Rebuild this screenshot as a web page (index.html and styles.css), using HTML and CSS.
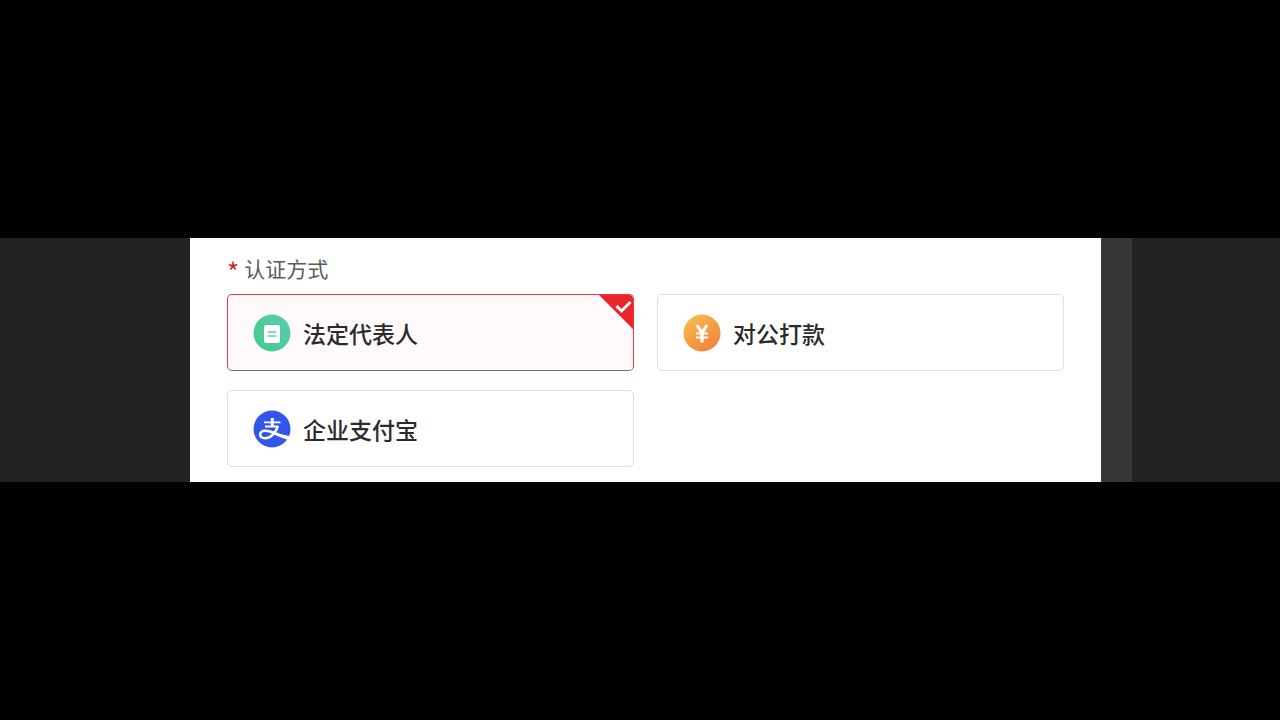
FILE: index.html
```html
<!DOCTYPE html>
<html lang="zh-CN">
<head>
  <meta charset="utf-8">
  <meta name="viewport" content="width=device-width, initial-scale=1">
  <title>认证方式</title>
  <link rel="stylesheet" href="styles.css">
</head>
<body>

<main class="stage">
  <form class="panel">
    <fieldset class="field">
      <legend class="field-label"><span class="required">*</span>认证方式</legend>
      <div class="options">

        <label class="option">
          <input class="option-input" type="radio" name="method" value="legal" checked>
          <svg class="option-icon" viewBox="0 0 38 38" aria-hidden="true">
            <defs>
              <linearGradient id="green" x1="0" y1="1" x2="1" y2="0">
                <stop offset="0" stop-color="#40cb86"/>
                <stop offset="1" stop-color="#5accb2"/>
              </linearGradient>
            </defs>
            <circle cx="19" cy="19" r="18.5" fill="url(#green)"/>
            <rect x="11" y="11" width="16" height="18" rx="2" fill="#fff"/>
            <path d="M14.5 18h9M14.5 22h9" stroke="#62d3a4" stroke-width="1.6"/>
          </svg>
          <span class="option-text">法定代表人</span>
          <svg class="option-corner" viewBox="0 0 34 34" aria-hidden="true">
            <path d="M0 0H34V34Z" fill="#e9242a"/>
            <path d="M17.5 11L22.5 16L31.5 7" fill="none" stroke="#fff" stroke-width="3"/>
          </svg>
        </label>

        <label class="option">
          <input class="option-input" type="radio" name="method" value="transfer">
          <svg class="option-icon" viewBox="0 0 38 38" aria-hidden="true">
            <defs>
              <linearGradient id="orange" x1="0.1" y1="0" x2="0.8" y2="1">
                <stop offset="0" stop-color="#f8c04e"/>
                <stop offset="1" stop-color="#f0803a"/>
              </linearGradient>
            </defs>
            <circle cx="19" cy="19" r="18.5" fill="url(#orange)"/>
            <path d="M14 11L19 19L24 11M19 18V28.5" fill="none" stroke="#fff" stroke-width="3.2"/>
            <path d="M13 19.5H25M13 23.5H25" stroke="#fff" stroke-width="2"/>
          </svg>
          <span class="option-text">对公打款</span>
          <svg class="option-corner" viewBox="0 0 34 34" aria-hidden="true">
            <path d="M0 0H34V34Z" fill="#e9242a"/>
            <path d="M17.5 11L22.5 16L31.5 7" fill="none" stroke="#fff" stroke-width="3"/>
          </svg>
        </label>

        <label class="option">
          <input class="option-input" type="radio" name="method" value="alipay">
          <svg class="option-icon" viewBox="0 0 38 38" aria-hidden="true">
            <circle cx="19" cy="19" r="18.5" fill="#3056ea"/>
            <path d="M19.3 8V16" stroke="#fff" stroke-width="3"/>
            <path d="M11 12.3H27.5M12 16.5H25" stroke="#fff" stroke-width="1.8"/>
            <path d="M25 16C23 22 18 28.2 12.5 28.2C5.5 28.2 5.5 20.8 12 20.8C16 20.8 19 22 23 24" fill="none" stroke="#fff" stroke-width="2.4"/>
            <path d="M20 21C26 23.5 31 25.2 36.5 26L35 29.8C30 28.5 25 26.5 19 23.2Z" fill="#fff"/>
          </svg>
          <span class="option-text">企业支付宝</span>
          <svg class="option-corner" viewBox="0 0 34 34" aria-hidden="true">
            <path d="M0 0H34V34Z" fill="#e9242a"/>
            <path d="M17.5 11L22.5 16L31.5 7" fill="none" stroke="#fff" stroke-width="3"/>
          </svg>
        </label>

      </div>
    </fieldset>
  </form>
  <div class="rail"></div>
</main>

</body>
</html>
```
FILE: styles.css
```css
* {
  box-sizing: border-box;
}

body {
  display: flex;
  flex-direction: column;
  justify-content: center;
  min-height: 100vh;
  margin: 0;
  background: #000;
  color: #2b2b2b;
  font-family: "Noto Sans CJK SC", sans-serif;
}

.stage {
  display: flex;
  padding: 0 148px 0 190px;
  background: #222;
}

.panel {
  flex: 1;
  padding: 16px 37px 15px;
  background: #fff;
}

.rail {
  width: 31px;
  background: #363638;
}

.field {
  min-width: 0;
  margin: 0;
  padding: 0;
  border: 0;
}

.field-label {
  display: flex;
  align-items: center;
  height: 28px;
  margin-bottom: 12px;
  padding: 0;
  color: #5a5a5a;
  font-size: 21px;
  line-height: 28px;
}

.required {
  margin-right: 5px;
  padding-top: 6px;
  color: #c9252b;
  font-size: 26px;
}

.options {
  display: grid;
  grid-template-columns: repeat(2, 1fr);
  gap: 19px 23px;
}

.option {
  position: relative;
  display: flex;
  align-items: center;
  gap: 12px;
  height: 77px;
  padding: 0 25px;
  overflow: hidden;
  border: 1px solid #dfdfe3;
  border-radius: 5px;
  cursor: pointer;
}

.option:has(:checked) {
  border-color: #ee3b41;
  border-bottom-color: #77696b;
  background: #fef9fb;
}

.option-input {
  position: absolute;
  margin: 0;
  opacity: 0;
}

.option-icon {
  flex: none;
  width: 38px;
  height: 38px;
}

.option-text {
  font-size: 23px;
  font-weight: 500;
  line-height: 32px;
}

/* tick in the corner of the selected card */
.option-corner {
  display: none;
  position: absolute;
  top: 0;
  right: 0;
  width: 34px;
  height: 34px;
}

.option:has(:checked) .option-corner {
  display: block;
}
```
